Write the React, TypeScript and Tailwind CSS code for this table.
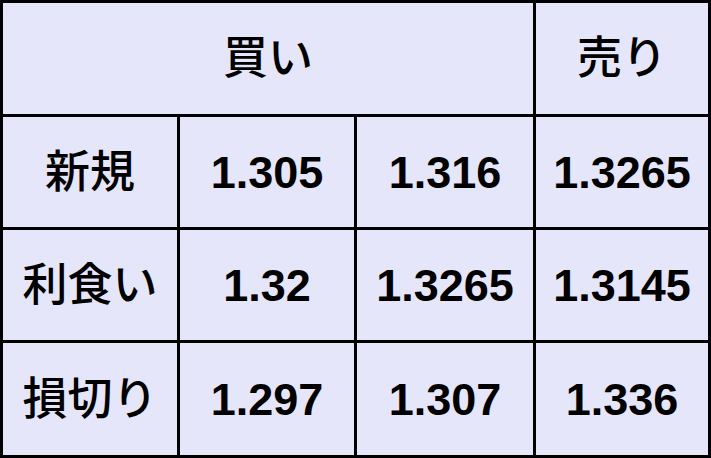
import React from "react";

const cell =
  "bg-[#e6e6fa] flex items-center justify-center text-black text-[45px] leading-none";

export default function App() {
  const rows: [string, string, string, string][] = [
    ["新規", "1.305", "1.316", "1.3265"],
    ["利食い", "1.32", "1.3265", "1.3145"],
    ["損切り", "1.297", "1.307", "1.336"],
  ];
  return (
    <div
      className="w-[711px] h-[458px] bg-black p-[3px] grid grid-cols-[174px_174px_176px_172px] grid-rows-[111px_110px_110px_112px] gap-[3px]"
      style={{ fontFamily: '"Liberation Sans", Arial, "Noto Sans CJK JP", sans-serif' }}
    >
      <div className={`${cell} col-span-3 font-medium`}>買い</div>
      <div className={`${cell} font-medium`}>売り</div>
      {rows.map((r) =>
        r.map((t, i) => (
          <div key={r[0] + i} className={`${cell} ${i === 0 ? "font-medium" : "font-bold"}`}>
            {t}
          </div>
        ))
      )}
    </div>
  );
}
